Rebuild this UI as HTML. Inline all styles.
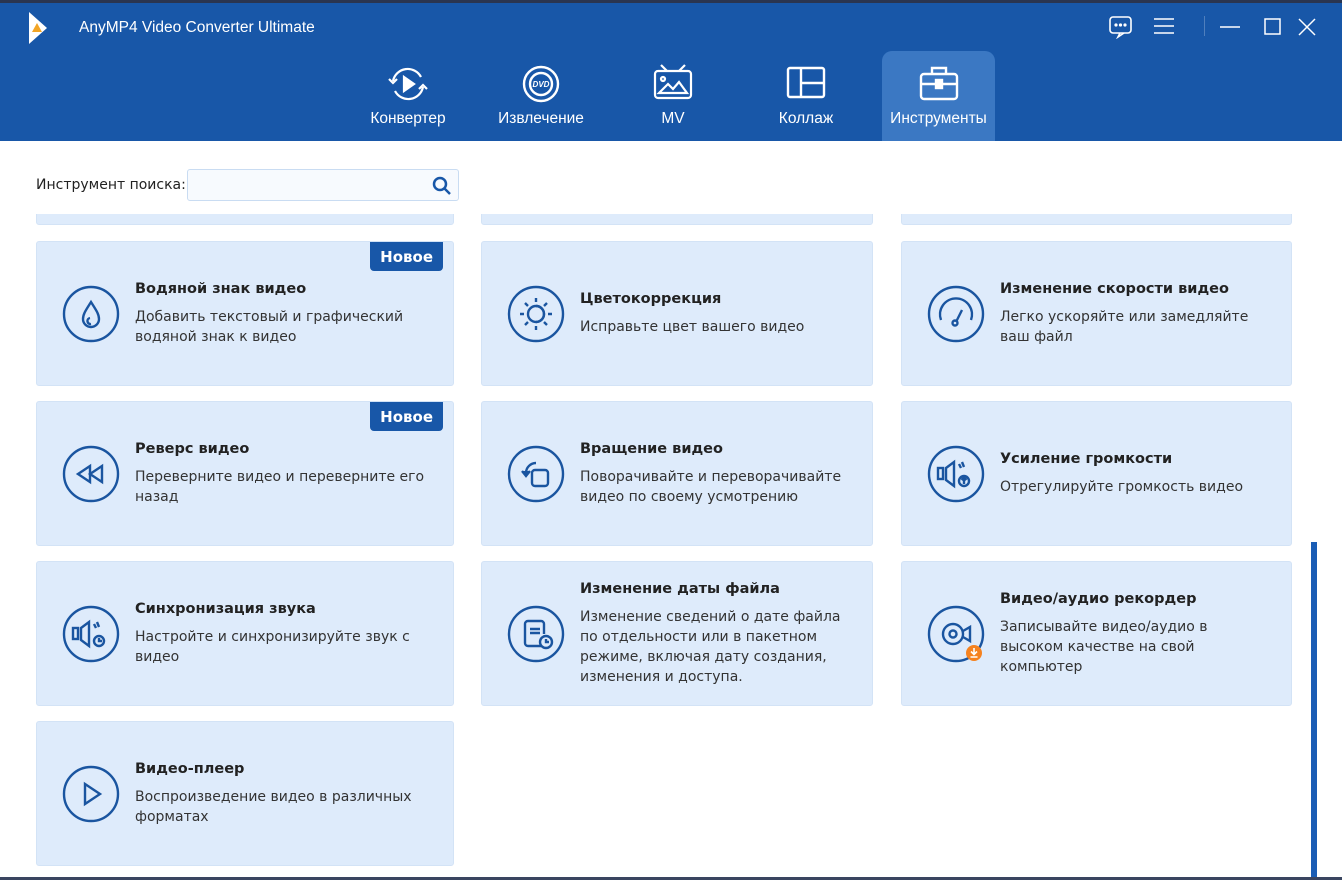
<!DOCTYPE html>
<html><head><meta charset="utf-8"><style>
*{margin:0;padding:0;box-sizing:border-box}
body{width:1342px;height:880px;overflow:hidden;background:#fff;font-family:"DejaVu Sans","Liberation Sans",sans-serif;position:relative}
.top{position:absolute;left:0;top:0;width:1342px;height:3px;background:#2a3550}
.hdr{position:absolute;left:0;top:3px;width:1342px;height:138px;background:#1857a8}
.title{position:absolute;left:79px;top:19px;color:#fff;font:15.5px "Liberation Sans",sans-serif}
.tab{position:absolute;top:48px;height:93px;color:#fff;font:15.5px "Liberation Sans",sans-serif;text-align:center}
.tab svg{position:absolute;left:50%;transform:translateX(-50%);top:16px}
.tab span{position:absolute;left:0;right:0;top:62px}
.active{background:#3b78c3;border-radius:10px 10px 0 0}
.search{position:absolute;left:36px;top:177px;font-size:14px;color:#222}
.sbox{position:absolute;left:187px;top:169px;width:272px;height:32px;border:1px solid #c9dcf2;border-radius:3px;background:#f7fafe}
.card{position:absolute;background:#deebfb;border:1px solid #d3e3f6;border-radius:3px}
.card .ic{position:absolute;left:24px;top:50%;margin-top:-30px}
.card h3{font-size:14.5px;font-weight:bold;color:#222;margin-bottom:10px}
.card p{font-size:14px;color:#333;line-height:20px}
.txt{position:absolute;left:98px;top:50%;transform:translateY(-50%)}
.new{position:absolute;right:10px;top:0;background:#1857a8;color:#fff;font-weight:bold;font-size:15px;padding:6px 10px 5px;border-radius:0 0 4px 4px}
.c1{left:36px;width:418px}.c2{left:481px;width:392px}.c3{left:901px;width:391px}
.r1{top:241px;height:145px}.r2{top:401px;height:145px}.r3{top:561px;height:145px}.r4{top:721px;height:145px}
</style></head><body>
<div class="top"></div>
<div class="hdr"></div>
<svg style="position:absolute;left:27px;top:11px" width="22" height="34" viewBox="0 0 22 34"><path d="M2 1 L20 17 L2 33 Z" fill="#fff"/><path d="M5 21 L10 12 L15 21Z" fill="#f2a525"/></svg>
<div class="title">AnyMP4 Video Converter Ultimate</div>
<svg style="position:absolute;left:1108px;top:15px" width="26" height="24" viewBox="0 0 26 24" fill="none" stroke="#fff" stroke-width="1.6"><rect x="2" y="2" width="21" height="16" rx="3"/><path d="M12 18 L10 22 L16 18"/><circle cx="8" cy="10" r=".8" fill="#fff"/><circle cx="12.5" cy="10" r=".8" fill="#fff"/><circle cx="17" cy="10" r=".8" fill="#fff"/></svg>
<svg style="position:absolute;left:1153px;top:17px" width="22" height="18" stroke="#fff" stroke-width="1.5"><path d="M1 2H21M1 9H21M1 16H21"/></svg>
<div style="position:absolute;left:1204px;top:16px;width:1px;height:20px;background:#4f7fbd"></div>
<svg style="position:absolute;left:1220px;top:17px" width="100" height="20" fill="none" stroke="#fff" stroke-width="1.5"><path d="M0 10H20"/><rect x="45" y="2" width="15" height="15"/><path d="M79 2L95 18M95 2L79 18"/></svg>

<div class="tab" style="left:360px;width:96px"><svg width="44" height="40" viewBox="0 0 44 40" fill="none" stroke="#fff" stroke-width="2.2"><path d="M7 17 A15 15 0 0 1 35 13"/><path d="M37 23 A15 15 0 0 1 9 27"/><path d="M3 15 L7 19 L11 15M33 25 L37 21 L41 25"/><path d="M18 13 L28 20 L18 27Z" fill="#fff"/></svg><span>Конвертер</span></div>
<div class="tab" style="left:490px;width:102px"><svg width="40" height="40" viewBox="0 0 40 40" fill="none" stroke="#fff" stroke-width="2.4"><circle cx="20" cy="20" r="17"/><circle cx="20" cy="20" r="11"/><text x="20" y="23" fill="#fff" stroke="none" font-size="8" font-family="Liberation Sans" font-weight="bold" text-anchor="middle" font-style="italic">DVD</text></svg><span>Извлечение</span></div>
<div class="tab" style="left:640px;width:66px"><svg width="40" height="36" viewBox="0 0 40 36" fill="none" stroke="#fff" stroke-width="2.2"><rect x="2" y="7" width="36" height="27" rx="3"/><path d="M8 1L14 7M32 1L26 7"/><circle cx="10" cy="15" r="2"/><path d="M6 29L15 20L20 25L26 18L34 29Z"/></svg><span>MV</span></div>
<div class="tab" style="left:770px;width:72px"><svg width="40" height="36" viewBox="0 0 40 36" fill="none" stroke="#fff" stroke-width="2.4"><rect x="2" y="4" width="36" height="29" rx="2"/><path d="M15 4V33M15 19H38"/></svg><span>Коллаж</span></div>
<div class="tab active" style="left:882px;width:113px;top:51px;height:90px"><svg width="40" height="36" viewBox="0 0 40 36" fill="none" stroke="#fff" stroke-width="2.4" style="top:14px"><rect x="2" y="9" width="36" height="25" rx="3"/><path d="M13 9V3H27V9M2 19H38"/><rect x="17" y="15" width="6" height="8" fill="#fff"/></svg><span style="top:59px">Инструменты</span></div>

<div class="card c1" style="top:200px;height:25px"></div>
<div class="card c2" style="top:200px;height:25px"></div>
<div class="card c3" style="top:200px;height:25px"></div>
<div style="position:absolute;left:0;top:141px;width:1342px;height:73px;background:#fff"></div>
<div class="search">Инструмент поиска:</div>
<div class="sbox"><svg style="position:absolute;right:6px;top:6px" width="20" height="20" fill="none" stroke="#1857a8" stroke-width="2.5"><circle cx="8" cy="8" r="6"/><path d="M12.5 12.5L18 18"/></svg></div>

<div class="card c1 r1"><div class="new">Новое</div>
<svg class="ic" width="60" height="60" viewBox="0 0 60 60" fill="none" stroke="#1a55a0" stroke-width="2.4"><circle cx="30" cy="30" r="27"/><path d="M30 18C25 26 22 30 22 35a8 8 0 0 0 16 0c0-5-3-9-8-17z"/><path d="M29 34a3 3 0 0 0 1 6"/></svg>
<div class="txt"><h3>Водяной знак видео</h3><p>Добавить текстовый и графический<br>водяной знак к видео</p></div></div>
<div class="card c2 r1"><svg class="ic" width="60" height="60" viewBox="0 0 60 60" fill="none" stroke="#1a55a0" stroke-width="2.4"><circle cx="30" cy="30" r="27"/><circle cx="30" cy="30" r="8"/><path d="M30 22a8 8 0 0 1 0 16a6 6 0 0 0 0-16z" fill="#1a55a0"/><path d="M30 14v4M30 42v4M14 30h4M42 30h4M19 19l3 3M38 38l3 3M41 19l-3 3M19 41l3-3"/></svg>
<div class="txt"><h3>Цветокоррекция</h3><p>Исправьте цвет вашего видео</p></div></div>
<div class="card c3 r1"><svg class="ic" width="60" height="60" viewBox="0 0 60 60" fill="none" stroke="#1a55a0" stroke-width="2.4"><circle cx="30" cy="30" r="27"/><path d="M15 36a16 16 0 1 1 30 0"/><path d="M30 38l6-12"/><circle cx="29" cy="39" r="2.5"/></svg>
<div class="txt"><h3>Изменение скорости видео</h3><p>Легко ускоряйте или замедляйте<br>ваш файл</p></div></div>
<div class="card c1 r2"><div class="new">Новое</div><svg class="ic" width="60" height="60" viewBox="0 0 60 60" fill="none" stroke="#1a55a0" stroke-width="2.4"><circle cx="30" cy="30" r="27"/><path d="M17 30l12-8v16zM29 30l12-8v16z"/></svg>
<div class="txt"><h3>Реверс видео</h3><p>Переверните видео и переверните его<br>назад</p></div></div>
<div class="card c2 r2"><svg class="ic" width="60" height="60" viewBox="0 0 60 60" fill="none" stroke="#1a55a0" stroke-width="2.4"><circle cx="30" cy="30" r="27"/><rect x="26" y="26" width="16" height="16" rx="3"/><path d="M30 19a10 10 0 0 0-10 10"/><path d="M16 27l4 5 4-5" fill="#1a55a0"/></svg>
<div class="txt"><h3>Вращение видео</h3><p>Поворачивайте и переворачивайте<br>видео по своему усмотрению</p></div></div>
<div class="card c3 r2"><svg class="ic" width="60" height="60" viewBox="0 0 60 60" fill="none" stroke="#1a55a0" stroke-width="2.4"><circle cx="30" cy="30" r="27"/><rect x="12" y="24" width="5" height="11"/><path d="M20 24l8-6v24l-8-6z"/><path d="M33 20l2 4M36 18l2 5"/><circle cx="38" cy="37" r="5"/><path d="M38 40v-6M35.5 36l2.5-2.5 2.5 2.5"/></svg>
<div class="txt"><h3>Усиление громкости</h3><p>Отрегулируйте громкость видео</p></div></div>
<div class="card c1 r3"><svg class="ic" width="60" height="60" viewBox="0 0 60 60" fill="none" stroke="#1a55a0" stroke-width="2.4"><circle cx="30" cy="30" r="27"/><rect x="12" y="24" width="5" height="11"/><path d="M20 24l8-6v24l-8-6z"/><path d="M33 20l2 4M36 18l2 5"/><circle cx="38" cy="37" r="5"/><path d="M38 34v3h3"/></svg>
<div class="txt"><h3>Синхронизация звука</h3><p>Настройте и синхронизируйте звук с<br>видео</p></div></div>
<div class="card c2 r3"><svg class="ic" width="60" height="60" viewBox="0 0 60 60" fill="none" stroke="#1a55a0" stroke-width="2.4"><circle cx="30" cy="30" r="27"/><path d="M35 42H22a3 3 0 0 1-3-3V20a3 3 0 0 1 3-3h13a3 3 0 0 1 3 3v10"/><path d="M24 25h10M24 29h10"/><circle cx="40" cy="38" r="6" fill="#deebfb"/><path d="M40 35v3h3"/></svg>
<div class="txt"><h3>Изменение даты файла</h3><p>Изменение сведений о дате файла<br>по отдельности или в пакетном<br>режиме, включая дату создания,<br>изменения и доступа.</p></div></div>
<div class="card c3 r3"><svg class="ic" width="60" height="60" viewBox="0 0 60 60" fill="none" stroke="#1a55a0" stroke-width="2.4"><circle cx="30" cy="30" r="27"/><circle cx="27" cy="30" r="10"/><circle cx="27" cy="30" r="3.5"/><path d="M37 27l7-4v14l-7-4"/><circle cx="48" cy="49" r="8" fill="#f5821f" stroke="none"/><path d="M48 44v6M45 47.5l3 3 3-3M44.5 53h7" stroke="#fff" stroke-width="1.6"/></svg>
<div class="txt"><h3>Видео/аудио рекордер</h3><p>Записывайте видео/аудио в<br>высоком качестве на свой<br>компьютер</p></div></div>
<div class="card c1 r4"><svg class="ic" width="60" height="60" viewBox="0 0 60 60" fill="none" stroke="#1a55a0" stroke-width="2.4"><circle cx="30" cy="30" r="27"/><path d="M24 20l15 10-15 10z"/></svg>
<div class="txt"><h3>Видео-плеер</h3><p>Воспроизведение видео в различных<br>форматах</p></div></div>

<div style="position:absolute;left:1311px;top:542px;width:6px;height:338px;background:#1a5db5"></div>
<div style="position:absolute;left:0;top:877px;width:1342px;height:3px;background:#3a4560"></div>
</body></html>
